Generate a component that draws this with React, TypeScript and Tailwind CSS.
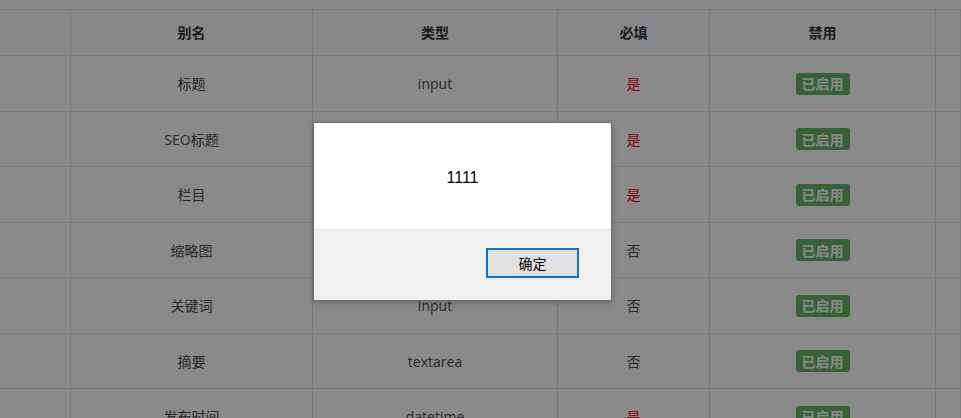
import React from 'react';

interface FieldRow {
  alias: string;
  type: string;
  required: boolean;
}

const rows: FieldRow[] = [
  { alias: '标题', type: 'input', required: true },
  { alias: 'SEO标题', type: 'input', required: true },
  { alias: '栏目', type: 'select', required: true },
  { alias: '缩略图', type: 'image', required: false },
  { alias: '关键词', type: 'input', required: false },
  { alias: '摘要', type: 'textarea', required: false },
  { alias: '发布时间', type: 'datetime', required: true },
];

const font = { fontFamily: '"Open Sans", "Noto Sans CJK SC", sans-serif' };
const cell = 'flex items-center justify-center border-r border-b border-[#e2e2e2]';

export default function App() {
  return (
    <div className="relative h-[418px] w-[961px] overflow-hidden bg-white" style={font}>
      <div className="h-[10px] border-b border-[#e2e2e2] bg-[#f8fcff]" />
      <div className="grid grid-cols-[71px_242px_245px_152px_226px_1fr] text-[14px] text-[#4a4a4a]">
        {['', '别名', '类型', '必填', '禁用', ''].map((h, i) => (
          <div key={i} className={`${cell} h-[46px] bg-[#f8fcff] font-bold text-[#333]`}>
            {h}
          </div>
        ))}
        {rows.map((r, i) => {
          const h = i % 2 === 0 ? 'h-[56px]' : 'h-[55px]';
          return (
            <React.Fragment key={r.alias}>
              <div className={`${cell} ${h}`} />
              <div className={`${cell} ${h}`}>{r.alias}</div>
              <div className={`${cell} ${h}`}>{r.type}</div>
              <div className={`${cell} ${h} ${r.required ? 'text-[#ff0010]' : ''}`}>
                {r.required ? '是' : '否'}
              </div>
              <div className={`${cell} ${h}`}>
                <span className="flex h-[22px] items-center rounded-[3px] bg-[#62b862] px-[6px] text-[14px] font-bold text-white">
                  已启用
                </span>
              </div>
              <div className={`${cell} ${h}`} />
            </React.Fragment>
          );
        })}
      </div>

      <div className="absolute inset-0 bg-black/[0.46]" />

      <div className="absolute left-[313px] top-[122px] flex h-[179px] w-[299px] flex-col border border-[#6e6e6e] bg-white shadow-[0_2px_6px_rgba(0,0,0,0.25)]">
        <div
          className="flex h-[106px] items-center justify-center pt-[4px] text-[16px] text-black"
          style={{ fontFamily: '"Liberation Sans", "Noto Sans CJK SC", sans-serif' }}
        >
          1111
        </div>
        <div className="flex flex-1 items-start justify-end border-t border-[#dfdfdf] bg-[#f0f0f0] pr-[32px] pt-[18px]">
          <button
            className="flex h-[30px] w-[93px] items-center justify-center border-2 border-[#0078d7] bg-[#e1e1e1] text-[14px] text-black"
            style={{ fontFamily: '"Noto Sans CJK SC", sans-serif' }}
          >
            确定
          </button>
        </div>
      </div>
    </div>
  );
}
